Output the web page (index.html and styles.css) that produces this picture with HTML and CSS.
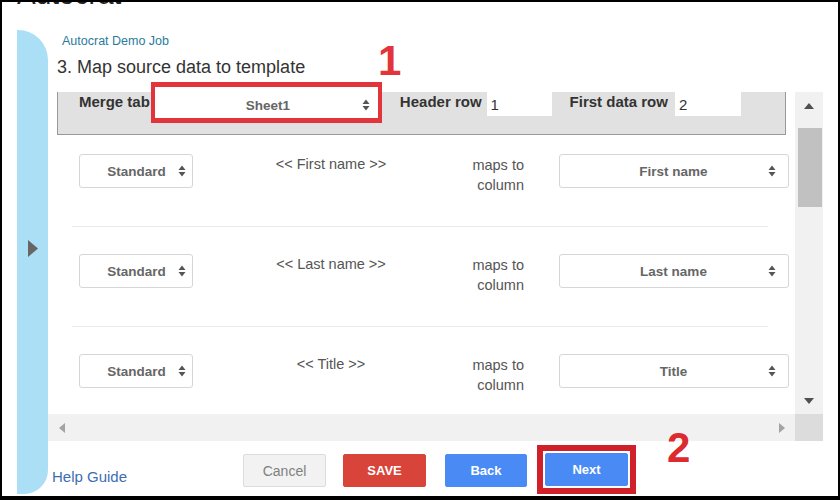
FILE: index.html
```html
<!DOCTYPE html>
<html lang="en">
<head>
    <meta charset="UTF-8">
    <title>Autocrat - Map source data</title>
    <link rel="stylesheet" href="styles.css">
</head>
<body>
    <div class="frame">
        <div class="app-title"><h1>Autocrat</h1></div>
        <div class="app">
            <div class="sidebar">
                <svg width="10" height="17" viewBox="0 0 10 17"><polygon points="0,0 10,8.5 0,17" fill="#666"/></svg>
            </div>
            <div class="main">
                <div class="job-name">Autocrat Demo Job</div>
                <h2 class="step-title">3. Map source data to template</h2>

                <div class="scroll-box">
                    <div class="scroll-content">
                        <div class="merge-bar">
                            <span class="bar-label">Merge tab</span>
                            <div class="select select-sheet">
                                <span>Sheet1</span>
                                <svg width="8" height="14" viewBox="0 0 8 14"><path d="M0.5 6 L4 1.5 L7.5 6 Z M0.5 8 L7.5 8 L4 12.5 Z" fill="#555"/></svg>
                            </div>
                            <span class="bar-label header-label">Header row</span>
                            <input type="text" class="bar-input input-header" value="1">
                            <span class="bar-label data-label">First data row</span>
                            <input type="text" class="bar-input input-data" value="2">
                        </div>

                        <div class="rows">
                            <div class="map-row">
                                <div class="select select-std">
                                    <span>Standard</span>
                                    <svg width="8" height="14" viewBox="0 0 8 14"><path d="M0.5 6 L4 1.5 L7.5 6 Z M0.5 8 L7.5 8 L4 12.5 Z" fill="#555"/></svg>
                                </div>
                                <div class="field-name">&lt;&lt; First name &gt;&gt;</div>
                                <div class="maps-to">maps to<br>column</div>
                                <div class="select select-col">
                                    <span>First name</span>
                                    <svg width="8" height="14" viewBox="0 0 8 14"><path d="M0.5 6 L4 1.5 L7.5 6 Z M0.5 8 L7.5 8 L4 12.5 Z" fill="#555"/></svg>
                                </div>
                            </div>
                            <div class="map-row">
                                <div class="select select-std">
                                    <span>Standard</span>
                                    <svg width="8" height="14" viewBox="0 0 8 14"><path d="M0.5 6 L4 1.5 L7.5 6 Z M0.5 8 L7.5 8 L4 12.5 Z" fill="#555"/></svg>
                                </div>
                                <div class="field-name">&lt;&lt; Last name &gt;&gt;</div>
                                <div class="maps-to">maps to<br>column</div>
                                <div class="select select-col">
                                    <span>Last name</span>
                                    <svg width="8" height="14" viewBox="0 0 8 14"><path d="M0.5 6 L4 1.5 L7.5 6 Z M0.5 8 L7.5 8 L4 12.5 Z" fill="#555"/></svg>
                                </div>
                            </div>
                            <div class="map-row">
                                <div class="select select-std">
                                    <span>Standard</span>
                                    <svg width="8" height="14" viewBox="0 0 8 14"><path d="M0.5 6 L4 1.5 L7.5 6 Z M0.5 8 L7.5 8 L4 12.5 Z" fill="#555"/></svg>
                                </div>
                                <div class="field-name">&lt;&lt; Title &gt;&gt;</div>
                                <div class="maps-to">maps to<br>column</div>
                                <div class="select select-col">
                                    <span>Title</span>
                                    <svg width="8" height="14" viewBox="0 0 8 14"><path d="M0.5 6 L4 1.5 L7.5 6 Z M0.5 8 L7.5 8 L4 12.5 Z" fill="#555"/></svg>
                                </div>
                            </div>
                        </div>
                    </div>

                    <div class="vbar">
                        <div class="sb-btn"><svg width="10" height="6" viewBox="0 0 10 6"><polygon points="0,6 5,0 10,6" fill="#505050"/></svg></div>
                        <div class="sb-thumb"></div>
                        <div class="sb-btn sb-down"><svg width="10" height="6" viewBox="0 0 10 6"><polygon points="0,0 10,0 5,6" fill="#505050"/></svg></div>
                    </div>
                    <div class="hbar">
                        <div class="sb-btn"><svg width="6" height="10" viewBox="0 0 6 10"><polygon points="6,0 6,10 0,5" fill="#a3a3a3"/></svg></div>
                        <div class="sb-btn"><svg width="6" height="10" viewBox="0 0 6 10"><polygon points="0,0 6,5 0,10" fill="#a3a3a3"/></svg></div>
                    </div>
                    <div class="sb-corner"></div>
                </div>

                <div class="footer">
                    <div class="help"><a href="#" class="help-link">Help Guide</a></div>
                    <button type="button" class="btn btn-cancel">Cancel</button>
                    <button type="button" class="btn btn-save">SAVE</button>
                    <button type="button" class="btn btn-blue btn-back">Back</button>
                    <span class="highlight-next"><button type="button" class="btn btn-blue">Next</button></span>
                </div>
            </div>
        </div>

        <div class="mark-box"></div>
        <div class="mark-num num-one">1</div>
        <div class="mark-num num-two">2</div>
    </div>
</body>
</html>
```

FILE: styles.css
```css
html, body {
    margin: 0;
    padding: 0;
    background: #000;
    height: 500px;
    overflow: hidden;
    font-family: "Liberation Sans", Arial, sans-serif;
}

.frame {
    position: relative;
    margin: 2px 2px 4px 2px;
    width: 836px;
    height: 494px;
    background: #fff;
}

.app-title {
    height: 3px;
    overflow: hidden;
}

.app-title h1 {
    margin: -21px 0 0 15px;
    font-size: 28px;
    line-height: 28px;
    font-weight: normal;
    color: #222;
}

.app {
    display: flex;
    height: 491px;
}

.sidebar {
    margin: 25px 0 2px 15px;
    width: 31px;
    background-color: #abdff5;
    border-radius: 0 30px 24px 0;
    padding: 210px 0 0 11px;
    box-sizing: border-box;
}

.sidebar svg {
    display: block;
}

.main {
    display: flex;
    flex-direction: column;
    width: 790px;
}

.job-name {
    margin: 29px 0 0 14px;
    font-size: 12.5px;
    line-height: 15px;
    color: #2a7b9b;
}

.step-title {
    margin: 7px 0 0 9px;
    font-size: 18px;
    line-height: 22px;
    font-weight: normal;
    color: #333;
}

/* scroll area with drawn scrollbars */
.scroll-box {
    margin-top: 14px;
    display: grid;
    grid-template-columns: 747px 28px;
    grid-template-rows: 322px 27px;
    width: 775px;
}

.scroll-content {
    overflow: hidden;
}

.merge-bar {
    margin-left: 9px;
    width: 729px;
    height: 43px;
    box-sizing: border-box;
    background-color: #e1e1e1;
    border: 1px solid #999;
    border-top: none;
    display: flex;
    align-items: flex-start;
    padding-left: 21px;
}

.bar-label {
    font-size: 15px;
    line-height: 20px;
    font-weight: bold;
    color: #333;
    white-space: nowrap;
}

.select {
    display: flex;
    align-items: center;
    box-sizing: border-box;
    background: #fff;
    flex-shrink: 0;
    font-size: 13.5px;
    font-weight: bold;
    color: #666;
}

.select span {
    flex: 1;
    text-align: center;
}

.select svg {
    display: block;
}

.select-sheet {
    margin-left: 5px;
    width: 223px;
    height: 26px;
    padding: 0 8px 0 19px;
}

.header-label {
    margin-left: 22px;
}

.data-label {
    margin-left: 18px;
}

.bar-input {
    height: 24px;
    box-sizing: border-box;
    border: none;
    outline: none;
    background: #fff;
    padding: 0 4px;
    font-family: "Liberation Sans", Arial, sans-serif;
    font-size: 15px;
    color: #333;
}

.input-header {
    margin-left: 5px;
    width: 65px;
}

.input-data {
    margin-left: 7px;
    width: 66px;
}

.rows {
    margin-left: 24px;
    width: 696px;
}

.map-row {
    display: flex;
    align-items: flex-start;
    padding: 27px 0 0 7px;
    height: 72px;
    border-bottom: 1px solid #ececec;
}

.map-row:first-child {
    padding-top: 19px;
}

.select-std,
.select-col {
    height: 34px;
    border: 1px solid #d6d6d6;
    border-radius: 3px;
}

.select-std {
    width: 114px;
    padding: 0 6px 0 15px;
}

.select-col {
    margin-left: 35px;
    width: 230px;
    padding: 0 12px 0 19px;
}

.field-name {
    width: 276px;
    flex-shrink: 0;
    text-align: center;
    font-size: 14.5px;
    line-height: 20px;
    color: #555;
}

.maps-to {
    width: 55px;
    flex-shrink: 0;
    text-align: right;
    font-size: 14.5px;
    line-height: 20px;
    padding-top: 1px;
    color: #555;
}

.vbar {
    background: #f1f1f1;
    display: flex;
    flex-direction: column;
}

.sb-btn {
    width: 27px;
    height: 27px;
    display: flex;
    align-items: center;
    justify-content: center;
    flex-shrink: 0;
}

.sb-thumb {
    margin: 9px 1px 0 3px;
    height: 79px;
    background: #c1c1c1;
}

.sb-down {
    margin-top: auto;
}

.hbar {
    background: #f1f1f1;
    display: flex;
    justify-content: space-between;
}

.sb-corner {
    background: #dcdcdc;
}

.footer {
    display: flex;
    align-items: flex-start;
    height: 55px;
}

.help {
    width: 191px;
    padding: 27px 0 0 4px;
}

.help-link {
    font-size: 15px;
    line-height: 18px;
    color: #3d6db5;
    text-decoration: none;
}

.btn {
    margin-top: 13px;
    width: 83px;
    height: 33px;
    border-radius: 2px;
    font-family: "Liberation Sans", Arial, sans-serif;
    font-size: 13px;
    cursor: pointer;
}

.btn-cancel {
    background: #f2f2f2;
    border: 1px solid #dcdcdc;
    color: #808080;
    font-size: 14px;
}

.btn-save {
    margin-left: 17px;
    background: #d9443a;
    border: 1px solid #d9443a;
    color: #fff;
    font-weight: bold;
}

.btn-blue {
    background: #4a8af4;
    border: 1px solid #4a8af4;
    color: #fff;
    font-weight: bold;
}

.btn-back {
    margin-left: 19px;
    width: 82px;
}

.highlight-next {
    margin: 4px 0 0 10px;
    padding: 2px;
    border: 6px solid #d0202a;
    display: flex;
}

.highlight-next .btn {
    margin-top: 0;
}

/* annotations drawn over the screenshot */
.mark-box {
    position: absolute;
    left: 149px;
    top: 80px;
    width: 231px;
    height: 41px;
    box-sizing: border-box;
    border: 4px solid #e2353b;
    border-width: 5px 4px;
}

.mark-num {
    position: absolute;
    font-size: 42px;
    line-height: 42px;
    font-weight: bold;
    color: #e3343a;
}

.num-one {
    left: 376px;
    top: 38px;
}

.num-two {
    left: 665px;
    top: 425px;
    color: #dc2a30;
}
```
